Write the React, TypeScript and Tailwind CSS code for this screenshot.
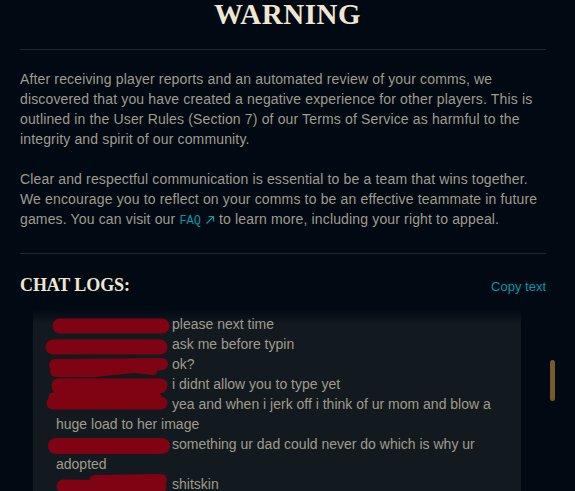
type Stroke = [number, number, number, number, number];

type ChatLine = {
  text: string;
  redact: { left: number; top: number; w: number; h: number; strokes: Stroke[] };
};

const CHAT: ChatLine[] = [
  {
    text: "please next time",
    redact: { left: -4, top: 4, w: 118, h: 16, strokes: [[8, 8, 110, 8, 15]] },
  },
  {
    text: "ask me before typin",
    redact: { left: -11, top: 5, w: 123, h: 16, strokes: [[8, 8, 115, 8, 15]] },
  },
  {
    text: "ok?",
    redact: {
      left: -8,
      top: 4,
      w: 121,
      h: 19,
      strokes: [
        [7, 7, 114, 6, 12],
        [8, 13, 50, 13, 12],
        [40, 6, 105, 13, 8],
        [50, 14, 112, 8, 9],
      ],
    },
  },
  {
    text: "i didnt allow you to type yet",
    redact: {
      left: -6,
      top: 4,
      w: 119,
      h: 16,
      strokes: [
        [8, 7, 111, 7, 13],
        [8, 10, 111, 9, 12],
        [40, 4, 95, 12, 7],
      ],
    },
  },
  {
    text: "yea and when i jerk off i think of ur mom and blow a huge load to her image",
    redact: {
      left: -11,
      top: -2,
      w: 124,
      h: 19,
      strokes: [
        [8, 5, 112, 5, 9],
        [8, 11, 116, 11, 13],
      ],
    },
  },
  {
    text: "something ur dad could never do which is why ur adopted",
    redact: { left: -8, top: 3, w: 122, h: 18, strokes: [[8, 9, 114, 9, 16]] },
  },
  {
    text: "shitskin",
    redact: {
      left: -1,
      top: 0,
      w: 113,
      h: 20,
      strokes: [
        [40, 7, 106, 6, 12],
        [8, 12, 105, 13, 13],
      ],
    },
  },
];

function Redaction({ r }: { r: ChatLine["redact"] }) {
  return (
    <svg
      className="pointer-events-none absolute"
      style={{ left: r.left, top: r.top }}
      width={r.w}
      height={r.h}
      viewBox={`0 0 ${r.w} ${r.h}`}
      aria-hidden
    >
      {r.strokes.map(([x1, y1, x2, y2, sw], i) => (
        <line
          key={i}
          x1={x1}
          y1={y1}
          x2={x2}
          y2={y2}
          stroke="#800313"
          strokeWidth={sw}
          strokeLinecap="round"
        />
      ))}
    </svg>
  );
}

export default function App() {
  return (
    <div className="min-h-screen overflow-hidden bg-[#010a13] font-['Liberation_Sans',Arial,sans-serif]">
      <div className="px-[20px] pt-[1px]">
        {/* Title */}
        <h1 className="text-center font-['Liberation_Serif',serif] text-[29px] font-bold leading-[26px] tracking-[0.5px] text-[#f0e6d2]">
          WARNING
        </h1>
        <div className="mt-[22px] h-px w-[526px] bg-[#1f252b]" />

        {/* Body */}
        <div className="mt-[19px] w-[526px] text-[14px] leading-[20px] tracking-[0.15px] text-[#a09b8c]">
          <p>
            After receiving player reports and an automated review of your comms, we discovered that
            you have created a negative experience for other players. This is outlined in the User
            Rules (Section 7) of our Terms of Service as harmful to the integrity and spirit of our
            community.
          </p>
          <p className="mt-[20px]">
            Clear and respectful communication is essential to be a team that wins together. We
            encourage you to reflect on your comms to be an effective teammate in future games. You
            can visit our{" "}
            <a className="font-['Liberation_Mono',monospace] text-[12px] leading-[20px] tracking-normal text-[#0596aa]">
              FAQ
              <svg
                className="ml-[4px] inline-block align-[-1px]"
                width="10"
                height="10"
                viewBox="0 0 10 10"
                fill="none"
                stroke="#0596aa"
                strokeWidth="1.2"
              >
                <path d="M1.5 8.5 L8.5 1.5 M3.5 1.5 H8.5 V6.5" />
              </svg>
            </a>{" "}
            to learn more, including your right to appeal.
          </p>
        </div>
        <div className="mt-[22px] h-px w-[526px] bg-[#1f252b]" />

        {/* Chat logs header */}
        <div className="mt-[19px] flex w-[526px] items-baseline justify-between">
          <h2 className="font-['Liberation_Serif',serif] text-[18px] font-bold leading-[24px] tracking-[-0.1px] text-[#f0e6d2]">
            CHAT LOGS:
          </h2>
          <button type="button" className="text-[13px] text-[#0596aa]">
            Copy text
          </button>
        </div>
      </div>

      {/* Chat box */}
      <div className="relative mt-[13px]">
        <div className="relative ml-[33px] w-[488px] bg-[#121a1f] pb-[40px] pl-[23px] pr-[16px] pt-[4px] text-[14px] leading-[20px] text-[#a09b8c]">
          <div className="pointer-events-none absolute inset-x-0 top-0 h-[14px] bg-linear-to-b from-[#010a13] to-transparent" />
          {CHAT.map((line, i) => (
            <p key={i} className="relative">
              <span className="inline-block w-[116px]" />
              {line.text}
              <Redaction r={line.redact} />
            </p>
          ))}
        </div>
        <div className="absolute right-[20px] top-[50px] h-[41px] w-[5px] rounded-full bg-[#785a28]" />
      </div>
    </div>
  );
}
